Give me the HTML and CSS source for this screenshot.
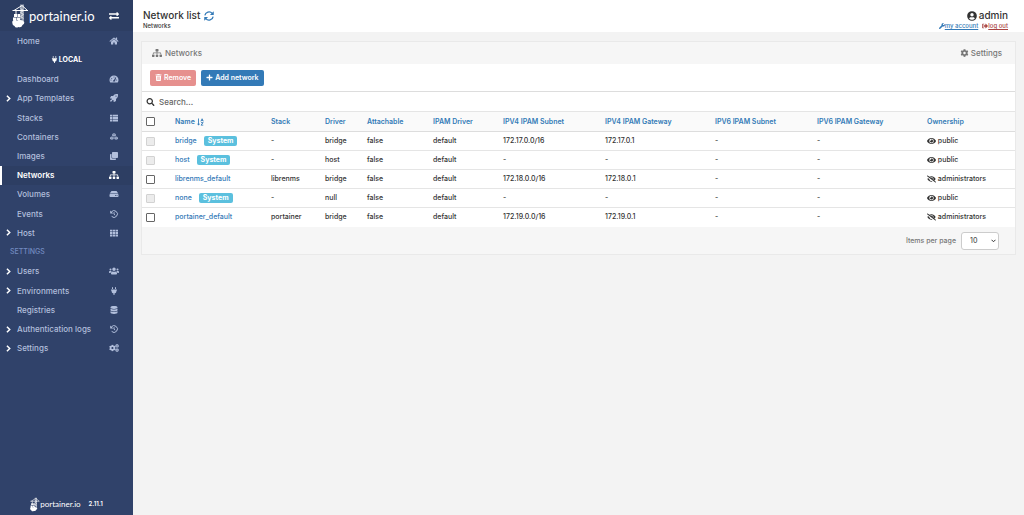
FILE: index.html
```html
<!DOCTYPE html>
<html lang="en">
<head>
<meta charset="utf-8">
<meta name="viewport" content="width=device-width, initial-scale=1">
<title>Portainer</title>
<link rel="stylesheet" href="styles.css">
</head>
<body>
<svg class="sprite" aria-hidden="true">
  <symbol id="home" viewBox="0 0 576 512"><path d="M280.37 148.26L96 300.11V464a16 16 0 0 0 16 16l112.06-.29a16 16 0 0 0 15.92-16V368a16 16 0 0 1 16-16h64a16 16 0 0 1 16 16v95.64a16 16 0 0 0 16 16.05L464 480a16 16 0 0 0 16-16V300L295.67 148.26a12.19 12.19 0 0 0-15.3 0zM571.6 251.47L488 182.56V44.05a12 12 0 0 0-12-12h-56a12 12 0 0 0-12 12v72.61L318.47 43a48 48 0 0 0-61 0L4.34 251.47a12 12 0 0 0-1.6 16.9l25.5 31A12 12 0 0 0 45.15 301l235.22-193.74a12.19 12.19 0 0 1 15.3 0L530.9 301a12 12 0 0 0 16.9-1.6l25.5-31a12 12 0 0 0-1.7-16.93z"/></symbol>
  <symbol id="plug" viewBox="0 0 384 512"><path d="M320 32a32 32 0 0 0-64 0v96h64Zm48 128H16A16 16 0 0 0 0 176v32a16 16 0 0 0 16 16H32v32A160 160 0 0 0 160 412.800V512h64V412.800A160 160 0 0 0 352 256V224h16a16 16 0 0 0 16-16V176A16 16 0 0 0 368 160ZM128 32a32 32 0 0 0-64 0v96h64Z"/></symbol>
  <symbol id="gauge" viewBox="0 0 576 512"><path fill-rule="evenodd" d="M288 32A288 288 0 0 0 0 320c0 53 14 102 39 145 6 10 16 15 27 15h444c11 0 21-5 27-15 25-43 39-92 39-145A288 288 0 0 0 288 32zM96 288a32 32 0 1 1 0 64 32 32 0 0 1 0-64zm48-96a32 32 0 1 1 0 64 32 32 0 0 1 0-64zm144-96a32 32 0 1 1 0 64 32 32 0 0 1 0-64zm94 46 46 14-75 224c9 12 11 24 11 36H212c0-48 32-78 66-80zM456 288a32 32 0 1 1 0 64 32 32 0 0 1 0-64z"/></symbol>
  <symbol id="rocket" viewBox="0 0 512 512"><path fill-rule="evenodd" d="M505 19c-1-6-6-11-12-12-32-7-57-7-82-7-103 0-165 55-211 128H95c-16 0-35 12-42 26L2 253c-6 12 2 27 18 27h110l-22 22c-12 12-12 32 0 45l57 57c12 12 32 12 45 0l22-22v110c0 16 15 24 27 18l99-50c14-7 26-26 26-42V312c72-46 128-108 128-211 0-25 0-50-7-82zM384 168a40 40 0 1 1 0-80 40 40 0 0 1 0 80zM48 376c22-20 70-8 84 14 12 28-4 68-40 82-30 10-62 12-88 12 0-40 6-84 44-108z"/></symbol>
  <symbol id="list" viewBox="0 0 512 512"><path d="M0 40h150v120H0zM182 40h330v120H182zM0 196h150v120H0zM182 196h330v120H182zM0 352h150v120H0zM182 352h330v120H182z"/></symbol>
  <symbol id="cubes" viewBox="0 0 512 512"><path d="M256 20 370 65v112L256 224 142 177V65zM124 218l106 44v120L122 430 8 380V264zM388 218l116 46v116l-114 50-108-48V262z"/><path class="cut" d="M156 72l100 40 100-40M256 112v100M20 272l102 44 106-44M122 316v104M284 272l106 44 104-44M390 316v104"/></symbol>
  <symbol id="clone" viewBox="0 0 512 512"><path d="M464 0c26 0 48 22 48 48v288c0 26-22 48-48 48H176c-26 0-48-22-48-48V48c0-26 22-48 48-48zM176 416c-44 0-80-36-80-80V128H48c-26 0-48 22-48 48v288c0 26 22 48 48 48h288c26 0 48-22 48-48v-48z"/></symbol>
  <symbol id="sitemap" viewBox="0 0 640 512"><path d="M128 352H32c-17.670 0-32 14.330-32 32v96c0 17.670 14.330 32 32 32h96c17.670 0 32-14.330 32-32v-96c0-17.670-14.330-32-32-32zm-24-80h192v48h48v-48h192v48h48v-57.590c0-21.170-17.230-38.410-38.410-38.410H344v-64h40c17.670 0 32-14.330 32-32V32c0-17.670-14.330-32-32-32H256c-17.670 0-32 14.330-32 32v96c0 17.670 14.330 32 32 32h40v64H94.410C73.230 224 56 241.230 56 262.410V320h48v-48zm264 80h-96c-17.670 0-32 14.330-32 32v96c0 17.670 14.330 32 32 32h96c17.670 0 32-14.330 32-32v-96c0-17.670-14.330-32-32-32zm240 0h-96c-17.670 0-32 14.330-32 32v96c0 17.670 14.330 32 32 32h96c17.670 0 32-14.330 32-32v-96c0-17.670-14.330-32-32-32z"/></symbol>
  <symbol id="hdd" viewBox="0 0 576 512"><path fill-rule="evenodd" d="M576 304v96c0 26-22 48-48 48H48c-26 0-48-22-48-48v-96c0-26 22-48 48-48h480c26 0 48 22 48 48zm-48-80c17 0 33 5 46 15L462 86c-8-14-23-22-40-22H154c-17 0-32 8-40 22L2 239c13-10 29-15 46-15zm-48 96a32 32 0 1 0 0 64 32 32 0 0 0 0-64zm-96 0a32 32 0 1 0 0 64 32 32 0 0 0 0-64z"/></symbol>
  <symbol id="history" viewBox="0 0 512 512"><path class="line" d="M82 130A216 216 0 1 1 105 410M256 140v130l74 58"/><path d="M10 30v178c0 10 8 18 18 18h178z"/></symbol>
  <symbol id="grid" viewBox="0 0 512 512"><path d="M0 40h150v120H0zM181 40h150v120H181zM362 40h150v120H362zM0 196h150v120H0zM181 196h150v120H181zM362 196h150v120H362zM0 352h150v120H0zM181 352h150v120H181zM362 352h150v120H362z"/></symbol>
  <symbol id="users" viewBox="0 0 640 512"><path d="M96 224a64 64 0 1 0 0-128 64 64 0 0 0 0 128zm448 0a64 64 0 1 0 0-128 64 64 0 0 0 0 128zM320 256a112 112 0 1 0 0-224 112 112 0 0 0 0 224zM64 256c-35 0-64 29-64 64v32c0 18 14 32 32 32h66c6-46 34-82 78-108-12-12-28-20-48-20zm512 0h-64c-20 0-36 8-48 20 44 26 72 62 78 108h66c18 0 32-14 32-32v-32c0-35-29-64-64-64zM243 288c-64 0-115 52-115 115v29c0 26 22 48 48 48h288c26 0 48-22 48-48v-29c0-63-51-115-115-115-22 0-44 16-77 16s-55-16-77-16z"/></symbol>
  <symbol id="database" viewBox="0 0 448 512"><path d="M448 73v46c0 40-100 73-224 73S0 159 0 119V73C0 33 100 0 224 0s224 33 224 73zM0 176c48 33 136 48 224 48s176-15 224-48v103c0 40-100 73-224 73S0 319 0 279zM0 336c48 33 136 48 224 48s176-15 224-48v103c0 40-100 73-224 73S0 479 0 439z"/></symbol>
  <symbol id="cog" viewBox="0 0 512 512"><path d="M487.400 315.700l-42.600-24.600c4.300-23.200 4.300-47 0-70.200l42.600-24.600c4.900-2.800 7.100-8.600 5.500-14-11.100-35.600-30-67.800-54.700-94.600-3.800-4.100-10-5.100-14.800-2.300L380.800 110c-17.900-15.400-38.500-27.300-60.800-35.100V25.800c0-5.600-3.900-10.500-9.400-11.700-36.700-8.200-74.300-7.800-109.200 0-5.500 1.200-9.400 6.100-9.400 11.700V75c-22.200 7.900-42.800 19.800-60.800 35.100L88.700 85.500c-4.900-2.800-11-1.900-14.800 2.300-24.700 26.700-43.600 58.900-54.700 94.600-1.700 5.400.6 11.200 5.500 14L67.300 221c-4.300 23.200-4.300 47 0 70.200l-42.600 24.600c-4.900 2.800-7.100 8.600-5.500 14 11.100 35.600 30 67.800 54.700 94.600 3.800 4.100 10 5.100 14.800 2.300l42.600-24.600c17.900 15.400 38.500 27.300 60.800 35.100v49.200c0 5.600 3.900 10.500 9.400 11.700 36.700 8.200 74.300 7.800 109.200 0 5.500-1.200 9.400-6.100 9.400-11.700v-49.200c22.200-7.900 42.800-19.800 60.800-35.100l42.600 24.600c4.900 2.800 11 1.900 14.800-2.300 24.700-26.700 43.600-58.900 54.700-94.600 1.500-5.500-.7-11.300-5.600-14.100zM256 336c-44.100 0-80-35.900-80-80s35.900-80 80-80 80 35.900 80 80-35.900 80-80 80z"/></symbol>
  <symbol id="cogs" viewBox="0 0 640 512"><use href="#cog" x="0" y="36" width="440" height="440"/><use href="#cog" x="390" y="0" width="250" height="250"/><use href="#cog" x="390" y="262" width="250" height="250"/></symbol>
  <symbol id="exchange" viewBox="0 0 512 512"><path d="M0 178v-46c0-13 11-14 24-14h360V80c0-21 26-32 41-17l80 80c9 9 9 25 0 34l-80 80c-15 15-41 4-41-17v-48H24c-13 0-24-1-24-14zM488 310H128v-38c0-21-26-32-41-17L7 335c-9 9-9 25 0 34l80 80c15 15 41 4 41-17v-48h360c13 0 24-1 24-14v-46c0-13-11-14-24-14z"/></symbol>
  <symbol id="chevron" viewBox="0 0 320 512"><path d="M45 50 250 256 45 462" fill="none" stroke="currentColor" stroke-width="110"/></symbol>
  <symbol id="caret" viewBox="0 0 10 7"><path d="M1 1l4 4 4-4" fill="none" stroke="currentColor" stroke-width="2"/></symbol>
  <symbol id="refresh" viewBox="0 0 512 512"><path class="line" d="M44 228A216 216 0 0 1 420 118M468 284A216 216 0 0 1 92 394"/><path d="M500 12v180c0 10-8 18-18 18H302zM12 500V320c0-10 8-18 18-18h180z"/></symbol>
  <symbol id="user" viewBox="0 0 496 512"><path fill-rule="evenodd" d="M248 8a248 248 0 1 0 0 496 248 248 0 0 0 0-496zm0 96a88 88 0 1 1 0 176 88 88 0 0 1 0-176zm0 344c-59 0-111-27-146-69 19-35 56-59 99-59 10 0 25 8 47 8s37-8 47-8c43 0 80 24 99 59-35 42-87 69-146 69z"/></symbol>
  <symbol id="wrench" viewBox="0 0 512 512"><path d="M507 109c-2-9-14-12-21-5l-74 74-68-11-11-68 74-74c7-7 4-19-6-21-50-12-105 1-144 40-42 42-54 102-37 155L19 400c-25 25-25 66 0 91s66 25 91 0l201-201c54 17 114 5 156-37 39-39 52-94 40-144z"/></symbol>
  <symbol id="logout" viewBox="0 0 512 512"><path d="M497 273 329 441c-15 15-41 4-41-17v-96H152c-13 0-24-11-24-24v-96c0-13 11-24 24-24h136V88c0-21 26-32 41-17l168 168c9 9 9 25 0 34zM192 436v-40c0-7-5-12-12-12H96c-18 0-32-14-32-32V160c0-18 14-32 32-32h84c7 0 12-5 12-12V76c0-7-5-12-12-12H96c-53 0-96 43-96 96v192c0 53 43 96 96 96h84c7 0 12-5 12-12z"/></symbol>
  <symbol id="trash" viewBox="0 0 448 512"><path fill-rule="evenodd" d="M16 32h112l20-32h152l20 32h112c9 0 16 7 16 16v48H0V48c0-9 7-16 16-16zM32 128h384l-22 339c-2 25-23 45-48 45H102c-25 0-46-20-48-45zm88 60v252h32V188zm88 0v252h32V188zm88 0v252h32V188z"/></symbol>
  <symbol id="plus" viewBox="0 0 448 512"><path d="M416 208H272V64c0-18-14-32-32-32h-32c-18 0-32 14-32 32v144H32c-18 0-32 14-32 32v32c0 18 14 32 32 32h144v144c0 18 14 32 32 32h32c18 0 32-14 32-32V304h144c18 0 32-14 32-32v-32c0-18-14-32-32-32z"/></symbol>
  <symbol id="search" viewBox="0 0 512 512"><path d="M505 442.700L405.300 343c-4.500-4.500-10.600-7-17-7H372c27.600-35.300 44-79.700 44-128C416 93.100 322.900 0 208 0S0 93.100 0 208s93.100 208 208 208c48.300 0 92.700-16.400 128-44v16.300c0 6.400 2.500 12.500 7 17l99.700 99.700c9.400 9.400 24.600 9.400 33.900 0l28.300-28.300c9.400-9.400 9.400-24.600.1-34zM208 336c-70.700 0-128-57.200-128-128 0-70.700 57.200-128 128-128 70.700 0 128 57.200 128 128 0 70.700-57.200 128-128 128z"/></symbol>
  <symbol id="sort" viewBox="0 0 448 512"><path d="M72 32h56v336h72L100 480 0 368h72z"/><path d="M250 216 326 48l76 168M276 160h100M256 296h136L256 456h144" fill="none" stroke="currentColor" stroke-width="56"/></symbol>
  <symbol id="eye" viewBox="0 0 576 512"><path d="M572.520 241.400C518.290 135.590 410.930 64 288 64S57.680 135.640 3.480 241.410a32.350 32.350 0 0 0 0 29.190C57.710 376.410 165.070 448 288 448s230.320-71.640 284.520-177.410a32.350 32.350 0 0 0 0-29.190zM288 400a144 144 0 1 1 144-144 143.930 143.930 0 0 1-144 144zm0-240a95.310 95.310 0 0 0-25.310 3.790 47.850 47.850 0 0 1-66.900 66.900A95.780 95.780 0 1 0 288 160z"/></symbol>
  <symbol id="eye-slash" viewBox="0 0 640 512"><path d="M320 400c-75.850 0-137.250-58.710-142.900-133.110L72.200 185.820c-13.790 17.300-26.480 35.590-36.720 55.590a32.350 32.350 0 0 0 0 29.190C89.710 376.410 197.070 448 320 448c26.910 0 52.870-4 77.890-10.460L346 397.390a144.130 144.130 0 0 1-26 2.610zm313.820 58.100l-110.550-85.440a331.250 331.250 0 0 0 81.250-102.070 32.350 32.350 0 0 0 0-29.190C550.290 135.590 442.930 64 320 64a308.150 308.150 0 0 0-147.320 37.700L45.460 3.370A16 16 0 0 0 23 6.180L3.370 31.450A16 16 0 0 0 6.180 53.900l588.360 454.730a16 16 0 0 0 22.460-2.810l19.640-25.270a16 16 0 0 0-2.820-22.450zm-183.720-142l-39.300-30.380A94.750 94.750 0 0 0 416 256a94.760 94.760 0 0 0-121.310-92.210A47.650 47.650 0 0 1 304 192a46.640 46.640 0 0 1-1.540 10l-73.610-56.890A142.310 142.310 0 0 1 320 112a143.920 143.920 0 0 1 144 144c0 21.630-5.290 41.790-13.900 60.110z"/></symbol>
  <symbol id="crane" viewBox="0 0 34 48"><path d="M1 13h31M4 13 20 3l11 10M18 1v30M22 1v33M18 9l4 4-4 4 4 4-4 4 4 4M8 13v8" fill="none" stroke="currentColor" stroke-width="2"/><path d="M4 20h6v6H4zM11 20h5v6h-5zM2 27h7v6H2zM10 27h6v6h-6zM1 34q5-3 10 0 6-4 13 1 2 5-3 7-2 6-8 4-6 3-8-2-6-2-4-10z"/></symbol>
</svg>
<div class="app">
  <aside class="sidebar">
    <div class="brand">
      <a class="logo" href="#"><svg class="crane"><use href="#crane"/></svg><span>portainer.io</span></a>
      <button class="toggle" type="button" aria-label="Toggle sidebar"><svg class="icon"><use href="#exchange"/></svg></button>
    </div>
    <nav class="menu">
      <a class="item" href="#"><span></span><span>Home</span><svg class="icon"><use href="#home"/></svg></a>
      <div class="endpoint"><svg class="icon small"><use href="#plug"/></svg>LOCAL</div>
      <a class="item" href="#"><span></span><span>Dashboard</span><svg class="icon"><use href="#gauge"/></svg></a>
      <a class="item" href="#"><svg class="chevron"><use href="#chevron"/></svg><span>App Templates</span><svg class="icon"><use href="#rocket"/></svg></a>
      <a class="item" href="#"><span></span><span>Stacks</span><svg class="icon"><use href="#list"/></svg></a>
      <a class="item" href="#"><span></span><span>Containers</span><svg class="icon"><use href="#cubes"/></svg></a>
      <a class="item" href="#"><span></span><span>Images</span><svg class="icon"><use href="#clone"/></svg></a>
      <a class="item active" href="#"><span></span><span>Networks</span><svg class="icon"><use href="#sitemap"/></svg></a>
      <a class="item" href="#"><span></span><span>Volumes</span><svg class="icon"><use href="#hdd"/></svg></a>
      <a class="item" href="#"><span></span><span>Events</span><svg class="icon"><use href="#history"/></svg></a>
      <a class="item" href="#"><svg class="chevron"><use href="#chevron"/></svg><span>Host</span><svg class="icon"><use href="#grid"/></svg></a>
      <div class="section">SETTINGS</div>
      <a class="item" href="#"><svg class="chevron"><use href="#chevron"/></svg><span>Users</span><svg class="icon"><use href="#users"/></svg></a>
      <a class="item" href="#"><svg class="chevron"><use href="#chevron"/></svg><span>Environments</span><svg class="icon"><use href="#plug"/></svg></a>
      <a class="item" href="#"><span></span><span>Registries</span><svg class="icon"><use href="#database"/></svg></a>
      <a class="item" href="#"><svg class="chevron"><use href="#chevron"/></svg><span>Authentication logs</span><svg class="icon"><use href="#history"/></svg></a>
      <a class="item" href="#"><svg class="chevron"><use href="#chevron"/></svg><span>Settings</span><svg class="icon"><use href="#cogs"/></svg></a>
    </nav>
    <footer class="version"><span class="logo logo-small"><svg class="crane"><use href="#crane"/></svg><span>portainer.io</span></span><span>2.11.1</span></footer>
  </aside>
  <main class="main">
    <header class="topbar">
      <div>
        <h1 class="title">Network list <button class="refresh" type="button" aria-label="Refresh"><svg class="icon"><use href="#refresh"/></svg></button></h1>
        <div class="crumb">Networks</div>
      </div>
      <div class="account">
        <div class="title"><svg class="icon"><use href="#user"/></svg>admin</div>
        <div class="links">
          <a href="#"><svg class="icon tiny"><use href="#wrench"/></svg>my account</a>
          <a class="logout" href="#"><svg class="icon tiny"><use href="#logout"/></svg>log out</a>
        </div>
      </div>
    </header>
    <section class="panel">
      <div class="panel-head">
        <h2 class="panel-title"><svg class="icon"><use href="#sitemap"/></svg>Networks</h2>
        <button class="panel-settings" type="button"><svg class="icon"><use href="#cog"/></svg>Settings</button>
      </div>
      <div class="actions">
        <button class="btn danger" type="button" disabled><svg class="icon small"><use href="#trash"/></svg>Remove</button>
        <button class="btn primary" type="button"><svg class="icon small"><use href="#plus"/></svg>Add network</button>
      </div>
      <label class="search"><svg class="icon"><use href="#search"/></svg><input type="text" placeholder="Search..." aria-label="Search"></label>
      <table class="table">
        <colgroup><col class="c-check"><col class="c-name"><col class="c-stack"><col class="c-driver"><col class="c-attach"><col class="c-ipam"><col class="c-subnet"><col class="c-gateway"><col class="c-subnet"><col class="c-gateway"><col class="c-owner"></colgroup>
        <thead>
          <tr><th><input type="checkbox" aria-label="Select all"></th><th><a href="#">Name <svg class="icon sort"><use href="#sort"/></svg></a></th><th><a href="#">Stack</a></th><th><a href="#">Driver</a></th><th><a href="#">Attachable</a></th><th><a href="#">IPAM Driver</a></th><th><a href="#">IPV4 IPAM Subnet</a></th><th><a href="#">IPV4 IPAM Gateway</a></th><th><a href="#">IPV6 IPAM Subnet</a></th><th><a href="#">IPV6 IPAM Gateway</a></th><th><a href="#">Ownership</a></th></tr>
        </thead>
        <tbody>
          <tr><td><input type="checkbox" disabled aria-label="Select bridge"></td><td><a href="#">bridge</a><span class="label">System</span></td><td>-</td><td>bridge</td><td>false</td><td>default</td><td>172.17.0.0/16</td><td>172.17.0.1</td><td>-</td><td>-</td><td><svg class="icon"><use href="#eye"/></svg> public</td></tr>
          <tr><td><input type="checkbox" disabled aria-label="Select host"></td><td><a href="#">host</a><span class="label">System</span></td><td>-</td><td>host</td><td>false</td><td>default</td><td>-</td><td>-</td><td>-</td><td>-</td><td><svg class="icon"><use href="#eye"/></svg> public</td></tr>
          <tr><td><input type="checkbox" aria-label="Select librenms_default"></td><td><a href="#">librenms_default</a></td><td>librenms</td><td>bridge</td><td>false</td><td>default</td><td>172.18.0.0/16</td><td>172.18.0.1</td><td>-</td><td>-</td><td><svg class="icon"><use href="#eye-slash"/></svg> administrators</td></tr>
          <tr><td><input type="checkbox" disabled aria-label="Select none"></td><td><a href="#">none</a><span class="label">System</span></td><td>-</td><td>null</td><td>false</td><td>default</td><td>-</td><td>-</td><td>-</td><td>-</td><td><svg class="icon"><use href="#eye"/></svg> public</td></tr>
          <tr><td><input type="checkbox" aria-label="Select portainer_default"></td><td><a href="#">portainer_default</a></td><td>portainer</td><td>bridge</td><td>false</td><td>default</td><td>172.19.0.0/16</td><td>172.19.0.1</td><td>-</td><td>-</td><td><svg class="icon"><use href="#eye-slash"/></svg> administrators</td></tr>
        </tbody>
      </table>
      <div class="panel-foot">
        <label for="per-page">Items per page</label>
        <span class="select"><select id="per-page"><option>10</option><option>25</option><option>50</option><option>100</option></select><svg class="caret"><use href="#caret"/></svg></span>
      </div>
    </section>
  </main>
</div>
</body>
</html>
```
FILE: styles.css
```css
* { box-sizing: border-box; }
body {
  margin: 0;
  font: 500 8px/12px Inter, "Open Sans", sans-serif;
  color: #333;
  background: #f3f3f3;
}
a { color: #337ab7; text-decoration: none; }
button, input, select { font: inherit; color: inherit; }
button { border: 0; padding: 0; background: none; cursor: pointer; }
.sprite { display: none; }
.icon { width: 9px; height: 8px; fill: currentColor; vertical-align: middle; flex: none; }
.small { width: 7px; height: 7px; }
.tiny { width: 6px; height: 6px; }
.line { fill: none; stroke: currentColor; stroke-width: 64px; }
.cut { fill: none; stroke: #30426a; stroke-width: 22px; }

.app { display: grid; grid-template-columns: 133px 1fr; min-height: 100vh; }

.sidebar { display: flex; flex-direction: column; background: #30426a; color: #b2bfdc; }
.brand {
  display: flex;
  align-items: center;
  justify-content: space-between;
  height: 31px;
  padding: 0 14px 0 12px;
  background: #2d3e63;
}
.logo { display: flex; align-items: center; color: #fff; font: 13px/16px Lato, sans-serif; }
.crane { width: 17px; height: 24px; fill: currentColor; }
.toggle { display: flex; color: #fff; }
.toggle .icon { width: 10px; height: 10px; }
.menu { display: grid; grid-template-rows: repeat(17, 1fr); height: 327px; }
.item {
  display: grid;
  grid-template-columns: 12px 1fr 11px;
  align-items: center;
  padding: 0 14px 0 3px;
  border-left: 2px solid transparent;
  color: #b2bfdc;
}
.item .icon { justify-self: center; width: 10px; }
.item.active { background: #2d3e63; border-color: #fff; color: #fff; font-weight: 600; }
.chevron { width: 5px; height: 7px; color: #fff; margin-left: 1px; }
.endpoint { display: flex; align-items: center; justify-content: center; gap: 1px; color: #fff; font-size: 7px; font-weight: 700; }
.section { display: flex; align-items: center; padding-left: 10px; font-size: 7px; color: #738bc0; }
.version { display: flex; align-items: center; justify-content: center; gap: 8px; margin-top: auto; padding-bottom: 3px; color: #fff; font-size: 6px; font-weight: 600; }
.logo-small { font-size: 8px; }
.logo-small .crane { width: 10px; height: 15px; }

.topbar {
  display: flex;
  justify-content: space-between;
  height: 32px;
  padding: 9px 16px 0 10px;
  background: #fff;
}
.title { display: flex; align-items: center; gap: 4px; margin: 0; font-size: 10px; line-height: 13px; font-weight: 500; }
.refresh { display: flex; color: #337ab7; }
.title .icon { width: 10px; height: 10px; }
.crumb, .links { font-size: 6px; line-height: 8px; }
.account { display: flex; flex-direction: column; align-items: flex-end; }
.account .title { gap: 2px; }
.links { display: flex; gap: 4px; }
.links a { text-decoration: underline; }
.links .logout { color: #a94442; }

.panel { margin: 9px 8px 0; border: 1px solid #e9e9e9; background: #fff; }
.panel-head {
  display: flex;
  align-items: center;
  justify-content: space-between;
  height: 22px;
  padding: 0 13px 0 10px;
  background: #f6f6f6;
  color: #767676;
}
.panel-title, .panel-settings { display: flex; align-items: center; gap: 3px; margin: 0; font-size: 8px; font-weight: 500; }
.panel-title .icon { width: 10px; }
.panel-settings { gap: 2px; }
.actions { display: flex; align-items: center; gap: 5px; height: 27px; padding: 0 8px; }
.btn {
  display: flex;
  align-items: center;
  gap: 2px;
  height: 16px;
  padding: 0 5px;
  border-radius: 2px;
  color: #fff;
  font-size: 7px;
  font-weight: 600;
}
.danger { background: #e6908e; }
.primary { background: #337ab7; }
.search { display: flex; align-items: center; gap: 4px; height: 20px; padding: 0 4px; border-top: 1px solid #ddd; }
.search input { flex: 1; min-width: 0; padding: 0; border: 0; outline: 0; background: none; }
.search input::placeholder { color: #666; }

.table { width: 100%; table-layout: fixed; border-collapse: collapse; font-size: 7px; line-height: 10px; }
.table th, .table td { height: 19px; padding: 0 0 0 5px; border-top: 1px solid #e5e5e5; text-align: left; white-space: nowrap; font-weight: 500; }
.table th { height: 20px; background: #fafafa; border-bottom: 1px solid #ddd; font-weight: 600; }
.table th:first-child, .table td:first-child { padding-left: 4px; }
.table .sort { margin-left: -1px; }
.table input {
  appearance: none;
  display: block;
  width: 9px;
  height: 9px;
  margin: 0;
  border: 1px solid #666;
  border-radius: 1px;
  background: #fff;
}
.table input:disabled { border-color: #d2d2d2; background: #ececec; }
.c-check { width: 28px; }
.c-name { width: 96px; }
.c-stack { width: 54px; }
.c-driver { width: 42px; }
.c-attach { width: 66px; }
.c-ipam { width: 70px; }
.c-subnet { width: 102px; }
.c-gateway { width: 110px; }
.c-owner { width: 93px; }
.label {
  display: inline-block;
  margin-left: 7px;
  padding: 0 4px;
  border-radius: 2px;
  background: #5bc0de;
  color: #fff;
  font-weight: 700;
}
.panel-foot {
  display: flex;
  align-items: center;
  justify-content: flex-end;
  gap: 5px;
  height: 27px;
  padding: 2px 16px 0;
  background: #f6f6f6;
  color: #767676;
  font-size: 7px;
}
.select { display: grid; align-items: center; }
.select > * { grid-area: 1 / 1; }
.select select { appearance: none; width: 38px; height: 18px; padding: 0 0 0 8px; border: 1px solid #ccc; border-radius: 3px; background: #fff; color: #555; }
.caret { justify-self: end; width: 5px; height: 4px; margin-right: 3px; color: #333; pointer-events: none; }
```
